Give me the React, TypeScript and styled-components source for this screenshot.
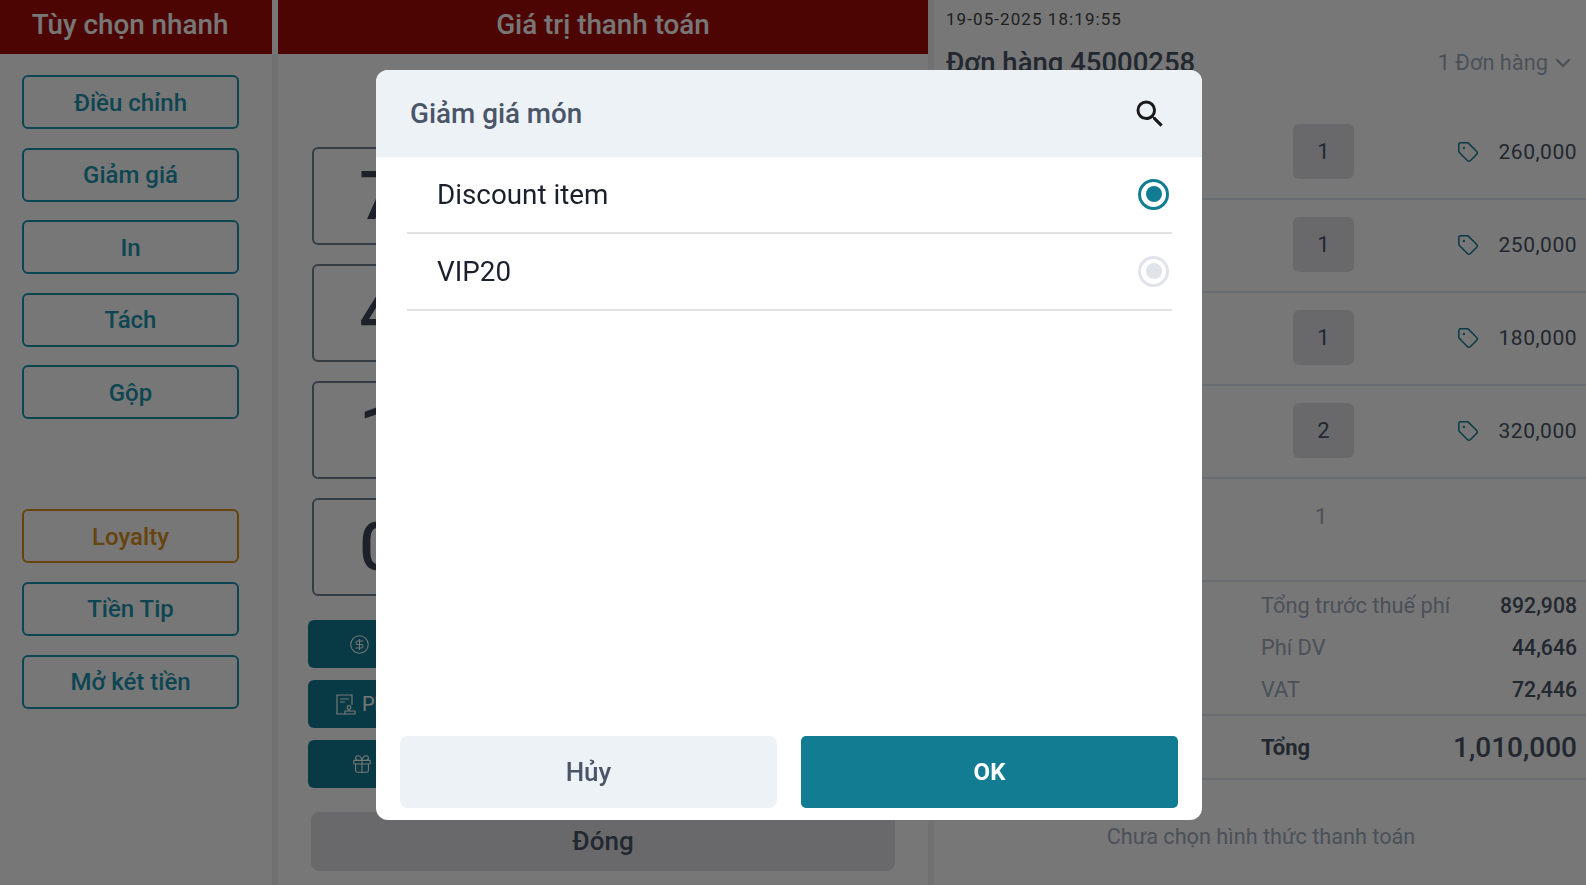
import { ChevronDown, CircleDollarSign, Gift, Tag } from 'lucide-react';
import { MdSearch } from 'react-icons/md';
import styled, { createGlobalStyle } from 'styled-components';

const TEAL = '#117c92';
const OUTLINE = '#1c96af';

const quickActions = ['Điều chỉnh', 'Giảm giá', 'In', 'Tách', 'Gộp'];
const extraActions = ['Tiền Tip', 'Mở két tiền'];
const keys = ['7', '4', '1', '0'];
const orderItems = [
  { qty: 1, price: '260,000' },
  { qty: 1, price: '250,000' },
  { qty: 1, price: '180,000' },
  { qty: 2, price: '320,000' },
];
const discounts = [
  { name: 'Discount item', selected: true },
  { name: 'VIP20', selected: false },
];

function StampIcon() {
  return (
    <svg width="20" height="21" viewBox="0 0 20 21" fill="none" stroke="currentColor" strokeWidth="1.2">
      <path d="M9 20H1V1h15v10" />
      <path d="M4 5h9M4 8h5" />
      <circle cx="13" cy="13.5" r="1.8" />
      <path d="M13 15.3v1.7M9 17h10v3H9z" />
    </svg>
  );
}

export default function App() {
  return (
    <Page>
      <GlobalStyle />
      <QuickColumn>
        <QuickHeader>Tùy chọn nhanh</QuickHeader>
        <QuickBody>
          <ActionGroup>
            {quickActions.map((label) => (
              <OutlineButton key={label}>{label}</OutlineButton>
            ))}
          </ActionGroup>
          <ActionGroup>
            <OutlineButton $accent="#dd8f1d">Loyalty</OutlineButton>
            {extraActions.map((label) => (
              <OutlineButton key={label}>{label}</OutlineButton>
            ))}
          </ActionGroup>
        </QuickBody>
      </QuickColumn>

      <PayColumn>
        <ColumnHeader>Giá trị thanh toán</ColumnHeader>
        <PayBody>
          <Keypad>
            {keys.map((key) => (
              <Key key={key}>{key}</Key>
            ))}
          </Keypad>
          <PayMethods>
            <PayMethod $indent={41}>
              <CircleDollarSign size={21} strokeWidth={1.2} />
            </PayMethod>
            <PayMethod $indent={28}>
              <StampIcon />
              Phiếu
            </PayMethod>
            <PayMethod $indent={43}>
              <Gift size={22} strokeWidth={1.2} />
            </PayMethod>
          </PayMethods>
          <CloseButton>Đóng</CloseButton>
        </PayBody>
      </PayColumn>

      <OrderColumn>
        <DateText>19-05-2025 18:19:55</DateText>
        <OrderHead>
          <OrderTitle>Đơn hàng 45000258</OrderTitle>
          <OrderCount>
            1 Đơn hàng
            <ChevronDown size={24} strokeWidth={2.3} />
          </OrderCount>
        </OrderHead>
        <ItemList>
          {orderItems.map((item) => (
            <ItemRow key={item.price}>
              <Qty>{item.qty}</Qty>
              <Price>
                <Tag size={22} strokeWidth={1.6} />
                {item.price}
              </Price>
            </ItemRow>
          ))}
          <PlainRow>1</PlainRow>
        </ItemList>
        <Summary>
          <SummaryRow>
            <span>Tổng trước thuế phí</span>
            <strong>892,908</strong>
          </SummaryRow>
          <SummaryRow>
            <span>Phí DV</span>
            <strong>44,646</strong>
          </SummaryRow>
          <SummaryRow>
            <span>VAT</span>
            <strong>72,446</strong>
          </SummaryRow>
        </Summary>
        <TotalRow>
          <span>Tổng</span>
          <strong>1,010,000</strong>
        </TotalRow>
        <PaymentNote>Chưa chọn hình thức thanh toán</PaymentNote>
      </OrderColumn>

      <Overlay>
        <Modal>
          <ModalHeader>
            <ModalTitle>Giảm giá món</ModalTitle>
            <MdSearch size={36} color="#1a1a1a" />
          </ModalHeader>
          <DiscountList>
            {discounts.map((discount) => (
              <DiscountRow key={discount.name}>
                {discount.name}
                <Radio $selected={discount.selected} />
              </DiscountRow>
            ))}
          </DiscountList>
          <ModalFooter>
            <CancelButton>Hủy</CancelButton>
            <OkButton>OK</OkButton>
          </ModalFooter>
        </Modal>
      </Overlay>
    </Page>
  );
}

const GlobalStyle = createGlobalStyle`
  html, body {
    margin: 0;
    height: 100%;
    background: #fff;
    font-family: Roboto, "Noto Sans", sans-serif;
    overflow: hidden;
  }
  * {
    box-sizing: border-box;
  }
`;

const Page = styled.div`
  display: flex;
  width: 1586px;
  height: 885px;
  color: #4a5568;
`;

const QuickColumn = styled.div`
  display: flex;
  flex-direction: column;
  width: 278px;
`;

const ColumnHeader = styled.div`
  display: flex;
  flex-shrink: 0;
  align-items: center;
  justify-content: center;
  height: 54px;
  padding-bottom: 6px;
  background: #a30b08;
  color: #fff;
  font-size: 27.8px;
  font-weight: 500;
`;

const QuickHeader = styled(ColumnHeader)`
  margin-right: 6px;
  padding-right: 12px;
`;

const QuickBody = styled.div`
  display: flex;
  flex-direction: column;
  gap: 90px;
  flex: 1;
  padding: 21px 33px 0 22px;
  border-right: 6px solid #edf2f7;
`;

const ActionGroup = styled.div`
  display: flex;
  flex-direction: column;
  gap: 18.6px;
`;

const OutlineButton = styled.div<{ $accent?: string }>`
  display: flex;
  align-items: center;
  justify-content: center;
  height: 54px;
  padding-top: 1px;
  border: 2px solid ${({ $accent }) => $accent || OUTLINE};
  border-radius: 6px;
  color: ${({ $accent }) => $accent || OUTLINE};
  font-size: 24px;
  font-weight: 500;
`;

const PayColumn = styled.div`
  display: flex;
  flex-direction: column;
  width: 650px;
`;

const PayBody = styled.div`
  display: flex;
  flex-direction: column;
  flex: 1;
  padding: 93px 33px 0 30px;
`;

const Keypad = styled.div`
  display: grid;
  grid-template-columns: 132px;
  grid-auto-rows: 98px;
  gap: 19px;
  padding-left: 4px;
`;

const Key = styled.div`
  display: flex;
  align-items: center;
  justify-content: center;
  border: 2px solid #718096;
  border-radius: 6px;
  color: #3f4a5a;
  font-size: 66px;
  font-weight: 500;
`;

const PayMethods = styled.div`
  display: flex;
  flex-direction: column;
  gap: 12px;
  margin-top: 24px;
`;

const PayMethod = styled.div<{ $indent: number }>`
  display: flex;
  align-items: center;
  gap: 6px;
  width: 300px;
  height: 48px;
  padding-left: ${({ $indent }) => $indent}px;
  border-radius: 6px;
  background: ${TEAL};
  color: #fff;
  font-size: 20px;
`;

const CloseButton = styled.div`
  display: flex;
  align-items: center;
  justify-content: center;
  height: 59px;
  margin: 24px 0 0 3px;
  padding-bottom: 2px;
  border-radius: 8px;
  background: #e0e2e5;
  color: #4a5568;
  font-size: 26px;
  font-weight: 500;
`;

const OrderColumn = styled.div`
  display: flex;
  flex-direction: column;
  width: 658px;
  padding: 0 10px 0 12px;
  border-left: 6px solid #edf2f7;
`;

const DateText = styled.div`
  height: 37px;
  padding-top: 9px;
  font-size: 17px;
  letter-spacing: 1.07px;
  color: #444;
`;

const OrderHead = styled.div`
  display: flex;
  align-items: center;
  justify-content: space-between;
  height: 51px;
`;

const OrderTitle = styled.div`
  font-size: 27.5px;
  font-weight: 500;
`;

const OrderCount = styled.div`
  display: flex;
  align-items: center;
  gap: 3px;
  margin-right: 1px;
  color: #a0aec0;
  font-size: 21.8px;
`;

const ItemList = styled.div`
  display: flex;
  flex-direction: column;
  margin: 19px -10px 0 0;
  height: 475px;
  border-bottom: 2px solid #e2e8f0;
`;

const ItemRow = styled.div`
  display: flex;
  align-items: center;
  justify-content: space-between;
  height: 93px;
  padding: 0 9px 2px 347px;
  border-bottom: 2px solid #e2e8f0;
`;

const Qty = styled.div`
  display: flex;
  align-items: center;
  justify-content: center;
  width: 61px;
  height: 55px;
  border-radius: 6px;
  background: #e0e2e5;
  font-size: 22px;
`;

const Price = styled.div`
  display: flex;
  align-items: center;
  gap: 20px;
  font-size: 21px;
  letter-spacing: 0.5px;
  svg {
    color: ${TEAL};
  }
`;

const PlainRow = styled.div`
  padding: 25px 0 0 369px;
  color: #a0aec0;
  font-size: 22px;
`;

const Summary = styled.div`
  display: flex;
  flex-direction: column;
  padding: 2.5px 9px 0 315px;
  height: 134px;
  margin-right: -10px;
  border-bottom: 2px solid #e2e8f0;
`;

const SummaryRow = styled.div`
  display: flex;
  align-items: center;
  justify-content: space-between;
  height: 42px;
  color: #a0aec0;
  font-size: 21.8px;
  strong {
    color: #4a5568;
    font-size: 21.2px;
    font-weight: 500;
  }
`;

const TotalRow = styled.div`
  display: flex;
  align-items: center;
  justify-content: space-between;
  height: 64px;
  margin-right: -10px;
  padding: 0 9px 0 315px;
  border-bottom: 2px solid #e2e8f0;
  font-size: 22px;
  span {
    font-weight: 700;
  }
  strong {
    font-size: 28px;
    font-weight: 500;
  }
`;

const PaymentNote = styled.div`
  padding-top: 44px;
  text-align: center;
  color: #a0aec0;
  font-size: 21.7px;
`;

const Overlay = styled.div`
  position: fixed;
  inset: 0;
  display: flex;
  justify-content: center;
  padding: 70px 8px 65px 0;
  background: rgba(0, 0, 0, 0.533);
`;

const Modal = styled.div`
  display: flex;
  flex-direction: column;
  width: 826px;
  border-radius: 12px;
  overflow: hidden;
  background: #fff;
`;

const ModalHeader = styled.div`
  display: flex;
  align-items: center;
  justify-content: space-between;
  height: 87px;
  padding: 0 34px 0 34px;
  background: #edf2f7;
`;

const ModalTitle = styled.div`
  color: #4a5568;
  font-size: 27.8px;
  font-weight: 500;
`;

const DiscountList = styled.div`
  flex: 1;
  padding: 0 30px 0 31px;
`;

const DiscountRow = styled.div`
  display: flex;
  align-items: center;
  justify-content: space-between;
  height: 77px;
  padding: 0 3px 1px 30px;
  border-bottom: 2px solid #e2e2e2;
  color: #1a202c;
  font-size: 27.8px;
`;

const Radio = styled.span<{ $selected: boolean }>`
  display: flex;
  align-items: center;
  justify-content: center;
  width: 31px;
  height: 31px;
  border: 3px solid ${({ $selected }) => ($selected ? TEAL : '#e0e4ea')};
  border-radius: 50%;
  &::after {
    content: '';
    width: 16px;
    height: 16px;
    border-radius: 50%;
    background: ${({ $selected }) => ($selected ? TEAL : '#e0e4ea')};
  }
`;

const ModalFooter = styled.div`
  display: flex;
  gap: 24px;
  padding: 0 24px 12px;
`;

const CancelButton = styled.div`
  display: flex;
  flex: 1;
  align-items: center;
  justify-content: center;
  height: 72px;
  border-radius: 8px;
  background: #edf2f7;
  color: #4a5568;
  font-size: 26px;
  font-weight: 500;
`;

const OkButton = styled(CancelButton)`
  border-radius: 5px;
  background: ${TEAL};
  color: #fff;
  font-size: 24px;
  font-weight: 700;
`;
